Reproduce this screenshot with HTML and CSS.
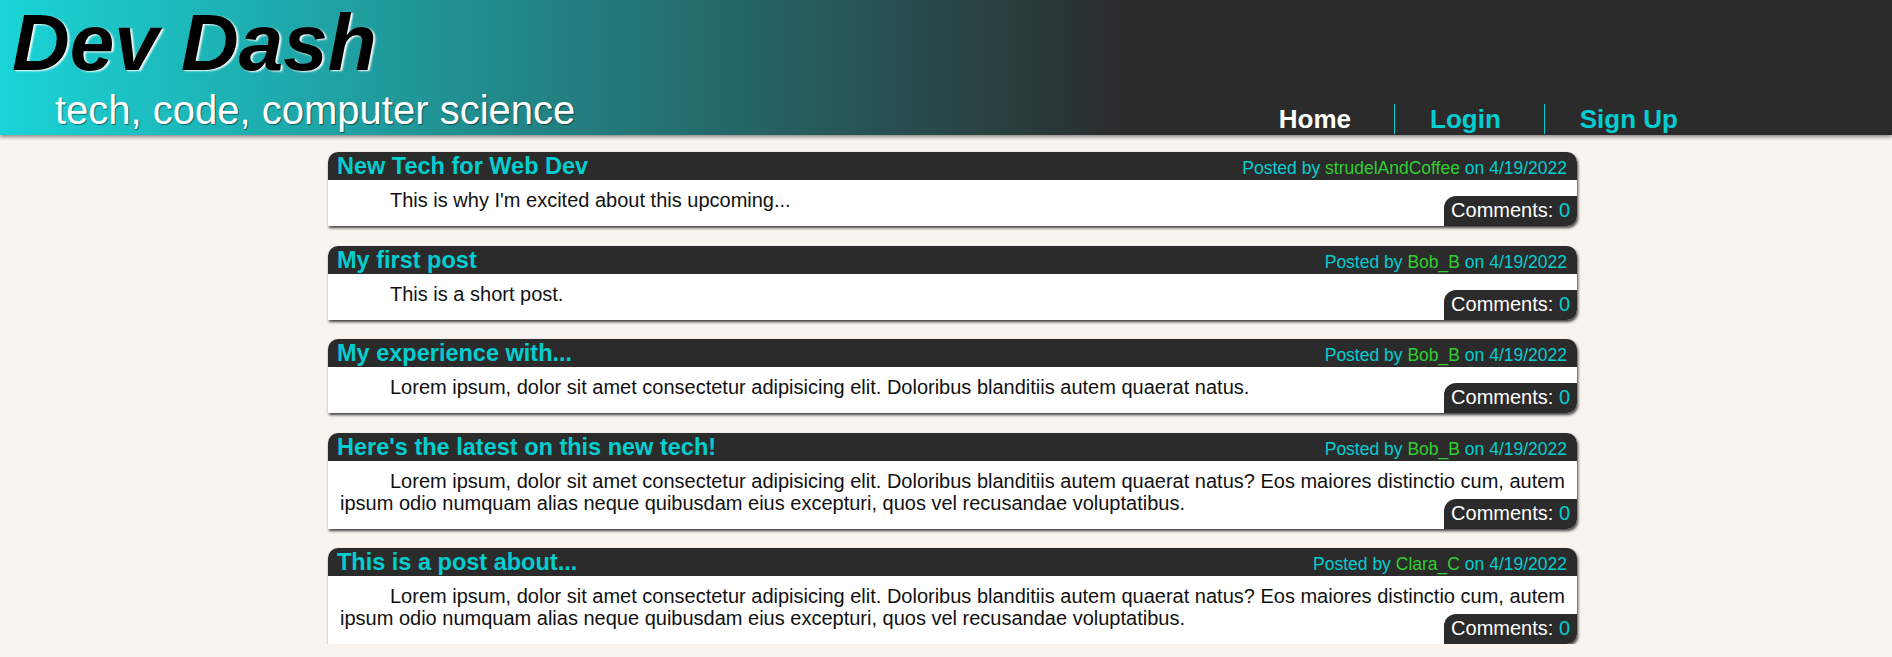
FILE: index.html
```html
<!DOCTYPE html>
<html lang="en">
<head>
<meta charset="utf-8">
<title>Dev Dash</title>
<link rel="stylesheet" href="styles.css">
</head>
<body>
<header class="site-header">
  <div class="brand">
    <h1 class="brand-title">Dev Dash</h1>
    <p class="brand-tagline">tech, code, computer science</p>
  </div>
  <nav class="nav">
    <ul class="nav-list">
      <li class="nav-item"><a class="nav-link active" href="#">Home</a></li>
      <li class="nav-item"><a class="nav-link" href="#">Login</a></li>
      <li class="nav-item"><a class="nav-link" href="#">Sign Up</a></li>
    </ul>
  </nav>
</header>

<main class="posts">
  <article class="post">
    <div class="post-head">
      <h2 class="post-title">New Tech for Web Dev</h2>
      <span class="post-meta">Posted by <span class="post-user">strudelAndCoffee</span> on 4/19/2022</span>
    </div>
    <div class="post-body">
      <p class="post-text">This is why I'm excited about this upcoming...</p>
      <span class="post-comments">Comments: <span class="post-count">0</span></span>
    </div>
  </article>

  <article class="post">
    <div class="post-head">
      <h2 class="post-title">My first post</h2>
      <span class="post-meta">Posted by <span class="post-user">Bob_B</span> on 4/19/2022</span>
    </div>
    <div class="post-body">
      <p class="post-text">This is a short post.</p>
      <span class="post-comments">Comments: <span class="post-count">0</span></span>
    </div>
  </article>

  <article class="post">
    <div class="post-head">
      <h2 class="post-title">My experience with...</h2>
      <span class="post-meta">Posted by <span class="post-user">Bob_B</span> on 4/19/2022</span>
    </div>
    <div class="post-body">
      <p class="post-text">Lorem ipsum, dolor sit amet consectetur adipisicing elit. Doloribus blanditiis autem quaerat natus.</p>
      <span class="post-comments">Comments: <span class="post-count">0</span></span>
    </div>
  </article>

  <article class="post">
    <div class="post-head">
      <h2 class="post-title">Here's the latest on this new tech!</h2>
      <span class="post-meta">Posted by <span class="post-user">Bob_B</span> on 4/19/2022</span>
    </div>
    <div class="post-body">
      <p class="post-text">Lorem ipsum, dolor sit amet consectetur adipisicing elit. Doloribus blanditiis autem quaerat natus? Eos maiores distinctio cum, autem ipsum odio numquam alias neque quibusdam eius excepturi, quos vel recusandae voluptatibus.</p>
      <span class="post-comments">Comments: <span class="post-count">0</span></span>
    </div>
  </article>

  <article class="post">
    <div class="post-head">
      <h2 class="post-title">This is a post about...</h2>
      <span class="post-meta">Posted by <span class="post-user">Clara_C</span> on 4/19/2022</span>
    </div>
    <div class="post-body">
      <p class="post-text">Lorem ipsum, dolor sit amet consectetur adipisicing elit. Doloribus blanditiis autem quaerat natus? Eos maiores distinctio cum, autem ipsum odio numquam alias neque quibusdam eius excepturi, quos vel recusandae voluptatibus.</p>
      <span class="post-comments">Comments: <span class="post-count">0</span></span>
    </div>
  </article>
</main>
</body>
</html>
```
FILE: styles.css
```css
* {
  box-sizing: border-box;
}

html, body {
  margin: 0;
  padding: 0;
}

body {
  background: #f8f4ef;
  font-family: "Liberation Sans", Arial, sans-serif;
  color: #111;
  overflow: hidden;
}

.site-header {
  display: flex;
  justify-content: space-between;
  align-items: flex-end;
  background: linear-gradient(90deg, #1ad4d7 0%, #2b2b2b 60%, #2b2b2b 100%);
  box-shadow: 0 2px 4px rgba(0, 0, 0, 0.45);
  position: relative;
  z-index: 1;
}

.brand {
  display: flex;
  flex-direction: column;
  padding-top: 3px;
  padding-bottom: 5px;
}

.brand-title {
  margin: 0 0 0 12px;
  font-size: 80px;
  line-height: 80px;
  font-weight: bold;
  font-style: italic;
  color: #000;
  text-shadow: 2px 1px 2px #fff;
}

.brand-tagline {
  margin: 7px 0 0 55px;
  font-size: 40px;
  line-height: 40px;
  color: #fff;
  text-shadow: 1px 1px 1px rgba(0, 0, 0, 0.45);
}

.nav {
  margin: 0 171px 1px 0;
}

.nav-list {
  display: flex;
  margin: 0;
  padding: 0;
  list-style: none;
}

.nav-item {
  padding: 0 43px 0 35px;
  font-size: 26px;
  line-height: 30px;
}

.nav-item + .nav-item {
  border-left: 1px solid #00ced1;
}

.nav-link {
  font-size: 26px;
  font-weight: bold;
  color: #00ced1;
  text-decoration: none;
}

.nav-link.active {
  color: #fff;
}

.posts {
  width: 1249px;
  margin: 17px 0 0 328px;
  display: flex;
  flex-direction: column;
  gap: 19.5px;
}

.post {
  background: #fff;
  border-radius: 10px 10px 10px 0;
  box-shadow: 1px 2px 3px rgba(0, 0, 0, 0.75);
}

.post-head {
  display: flex;
  justify-content: space-between;
  align-items: baseline;
  height: 28px;
  padding: 0 10px 0 9px;
  background: #2b2b2b;
  border-radius: 10px 10px 0 0;
}

.post-title {
  margin: 0;
  font-size: 23.5px;
  line-height: 28px;
  font-weight: bold;
  color: #00ced1;
}

.post-meta {
  font-size: 17.5px;
  color: #00ced1;
}

.post-user {
  color: #32cd32;
}

.post-body {
  position: relative;
  padding: 9px 6px 15px 12px;
}

.post-text {
  margin: 0;
  font-size: 20px;
  line-height: 22px;
  text-indent: 50px;
}

.post-comments {
  position: absolute;
  right: 0;
  bottom: 0;
  height: 30px;
  padding: 3px 7px 0 7px;
  background: #2b2b2b;
  color: #fff;
  font-size: 20px;
  line-height: 23px;
  border-radius: 12px 0 10px 0;
}

.post-count {
  color: #00ced1;
}
```
